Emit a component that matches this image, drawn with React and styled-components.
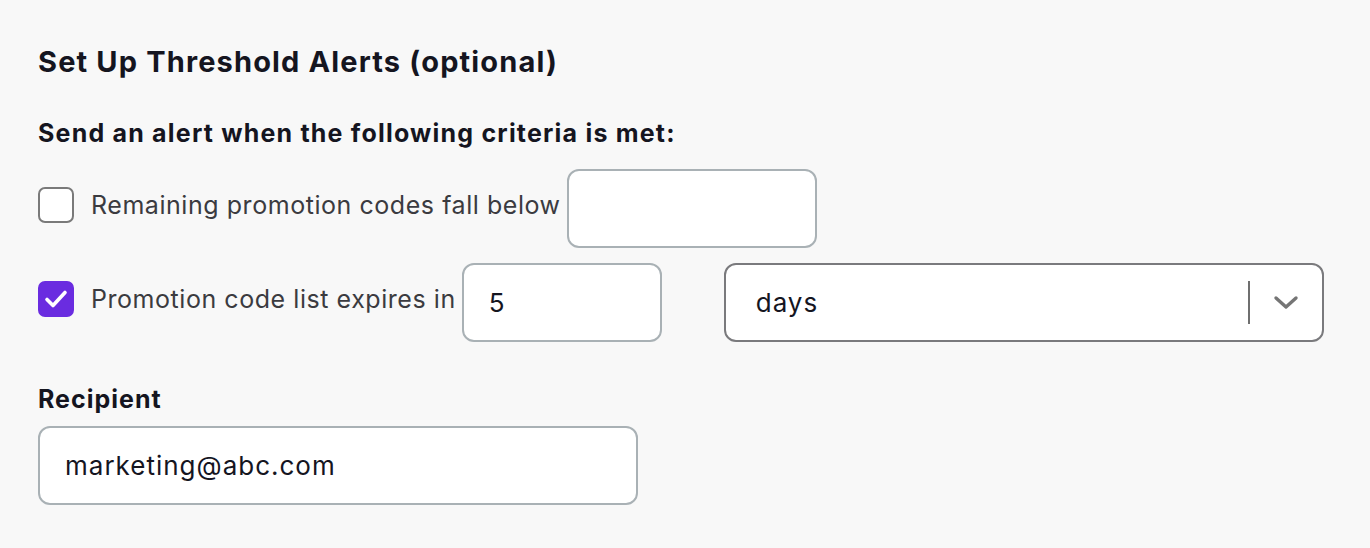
import React from 'react';
import styled, { createGlobalStyle } from 'styled-components';

const GlobalStyle = createGlobalStyle`
  html, body {
    margin: 0;
    padding: 0;
    background: #f8f8f8;
  }
  body {
    font-family: "Inter", "Noto Sans", sans-serif;
  }
`;

const Page = styled.div`
  display: flex;
  flex-direction: column;
  padding: 42px 38px 0;
  color: #15151f;
`;

const Title = styled.h2`
  margin: 0;
  font-size: 29px;
  font-weight: 700;
  letter-spacing: 1.15px;
  line-height: 40px;
`;

const Subtitle = styled.h3`
  margin: 35px 0 20px;
  font-size: 25px;
  font-weight: 700;
  letter-spacing: 1.2px;
  line-height: 32px;
`;

const Row = styled.div`
  display: flex;
  align-items: center;
  margin-bottom: ${(p) => p.$gap || 0}px;
`;

const Option = styled.label`
  display: flex;
  align-items: center;
  gap: 17px;
  margin-bottom: 7px;
  margin-right: 6px;
  cursor: pointer;
`;

const Box = styled.span`
  width: 36px;
  height: 36px;
  box-sizing: border-box;
  border-radius: 7px;
  display: flex;
  align-items: center;
  justify-content: center;
  border: 2px solid ${(p) => (p.$checked ? '#6a2ce0' : '#7a7a7a')};
  background: ${(p) => (p.$checked ? '#6a2ce0' : '#ffffff')};
`;

const OptionText = styled.span`
  font-size: 25px;
  letter-spacing: 0.55px;
  color: #3b3b40;
  white-space: nowrap;
`;

const Field = styled.input`
  box-sizing: border-box;
  width: ${(p) => p.$width}px;
  height: 79px;
  border: 2px solid #a9b1b5;
  border-radius: 12px;
  background: #ffffff;
  padding: 0 25px;
  font-family: inherit;
  font-size: 26px;
  letter-spacing: 1px;
  color: #15151f;
  outline: none;
`;

const Select = styled.div`
  box-sizing: border-box;
  width: 600px;
  height: 79px;
  margin-left: 62px;
  border: 2px solid #7a7a7d;
  border-radius: 12px;
  background: #ffffff;
  display: flex;
  align-items: center;
  padding-left: 30px;
`;

const SelectValue = styled.span`
  flex: 1;
  font-size: 26px;
  letter-spacing: 1px;
  color: #15151f;
`;

const Divider = styled.span`
  width: 2px;
  height: 43px;
  background: #6f6f6f;
`;

const Chevron = styled.span`
  width: 72px;
  display: flex;
  justify-content: center;
  align-items: center;
`;

const Label = styled.div`
  margin-top: 42px;
  margin-bottom: 12px;
  font-size: 25px;
  font-weight: 700;
  letter-spacing: 1px;
  line-height: 30px;
`;

const Check = ({ checked }) => (
  <Box $checked={checked}>
    {checked && (
      <svg width="24" height="20" viewBox="0 0 24 20">
        <path d="M3 10.5 L9 16.5 L21 3.5" fill="none" stroke="#fff" strokeWidth="3.6" strokeLinecap="round" strokeLinejoin="round" />
      </svg>
    )}
  </Box>
);

export default function App() {
  return (
    <Page>
      <GlobalStyle />
      <Title>Set Up Threshold Alerts (optional)</Title>
      <Subtitle>Send an alert when the following criteria is met:</Subtitle>
      <Row $gap={15}>
        <Option>
          <Check checked={false} />
          <OptionText>Remaining promotion codes fall below</OptionText>
        </Option>
        <Field $width={250} defaultValue="" />
      </Row>
      <Row>
        <Option>
          <Check checked />
          <OptionText>Promotion code list expires in</OptionText>
        </Option>
        <Field $width={200} defaultValue="5" />
        <Select>
          <SelectValue>days</SelectValue>
          <Divider />
          <Chevron>
            <svg width="26" height="16" viewBox="0 0 26 16">
              <path d="M3 3 L13 12 L23 3" fill="none" stroke="#757575" strokeWidth="3.4" strokeLinecap="round" strokeLinejoin="round" />
            </svg>
          </Chevron>
        </Select>
      </Row>
      <Label>Recipient</Label>
      <Field $width={600} defaultValue="marketing@abc.com" />
    </Page>
  );
}
